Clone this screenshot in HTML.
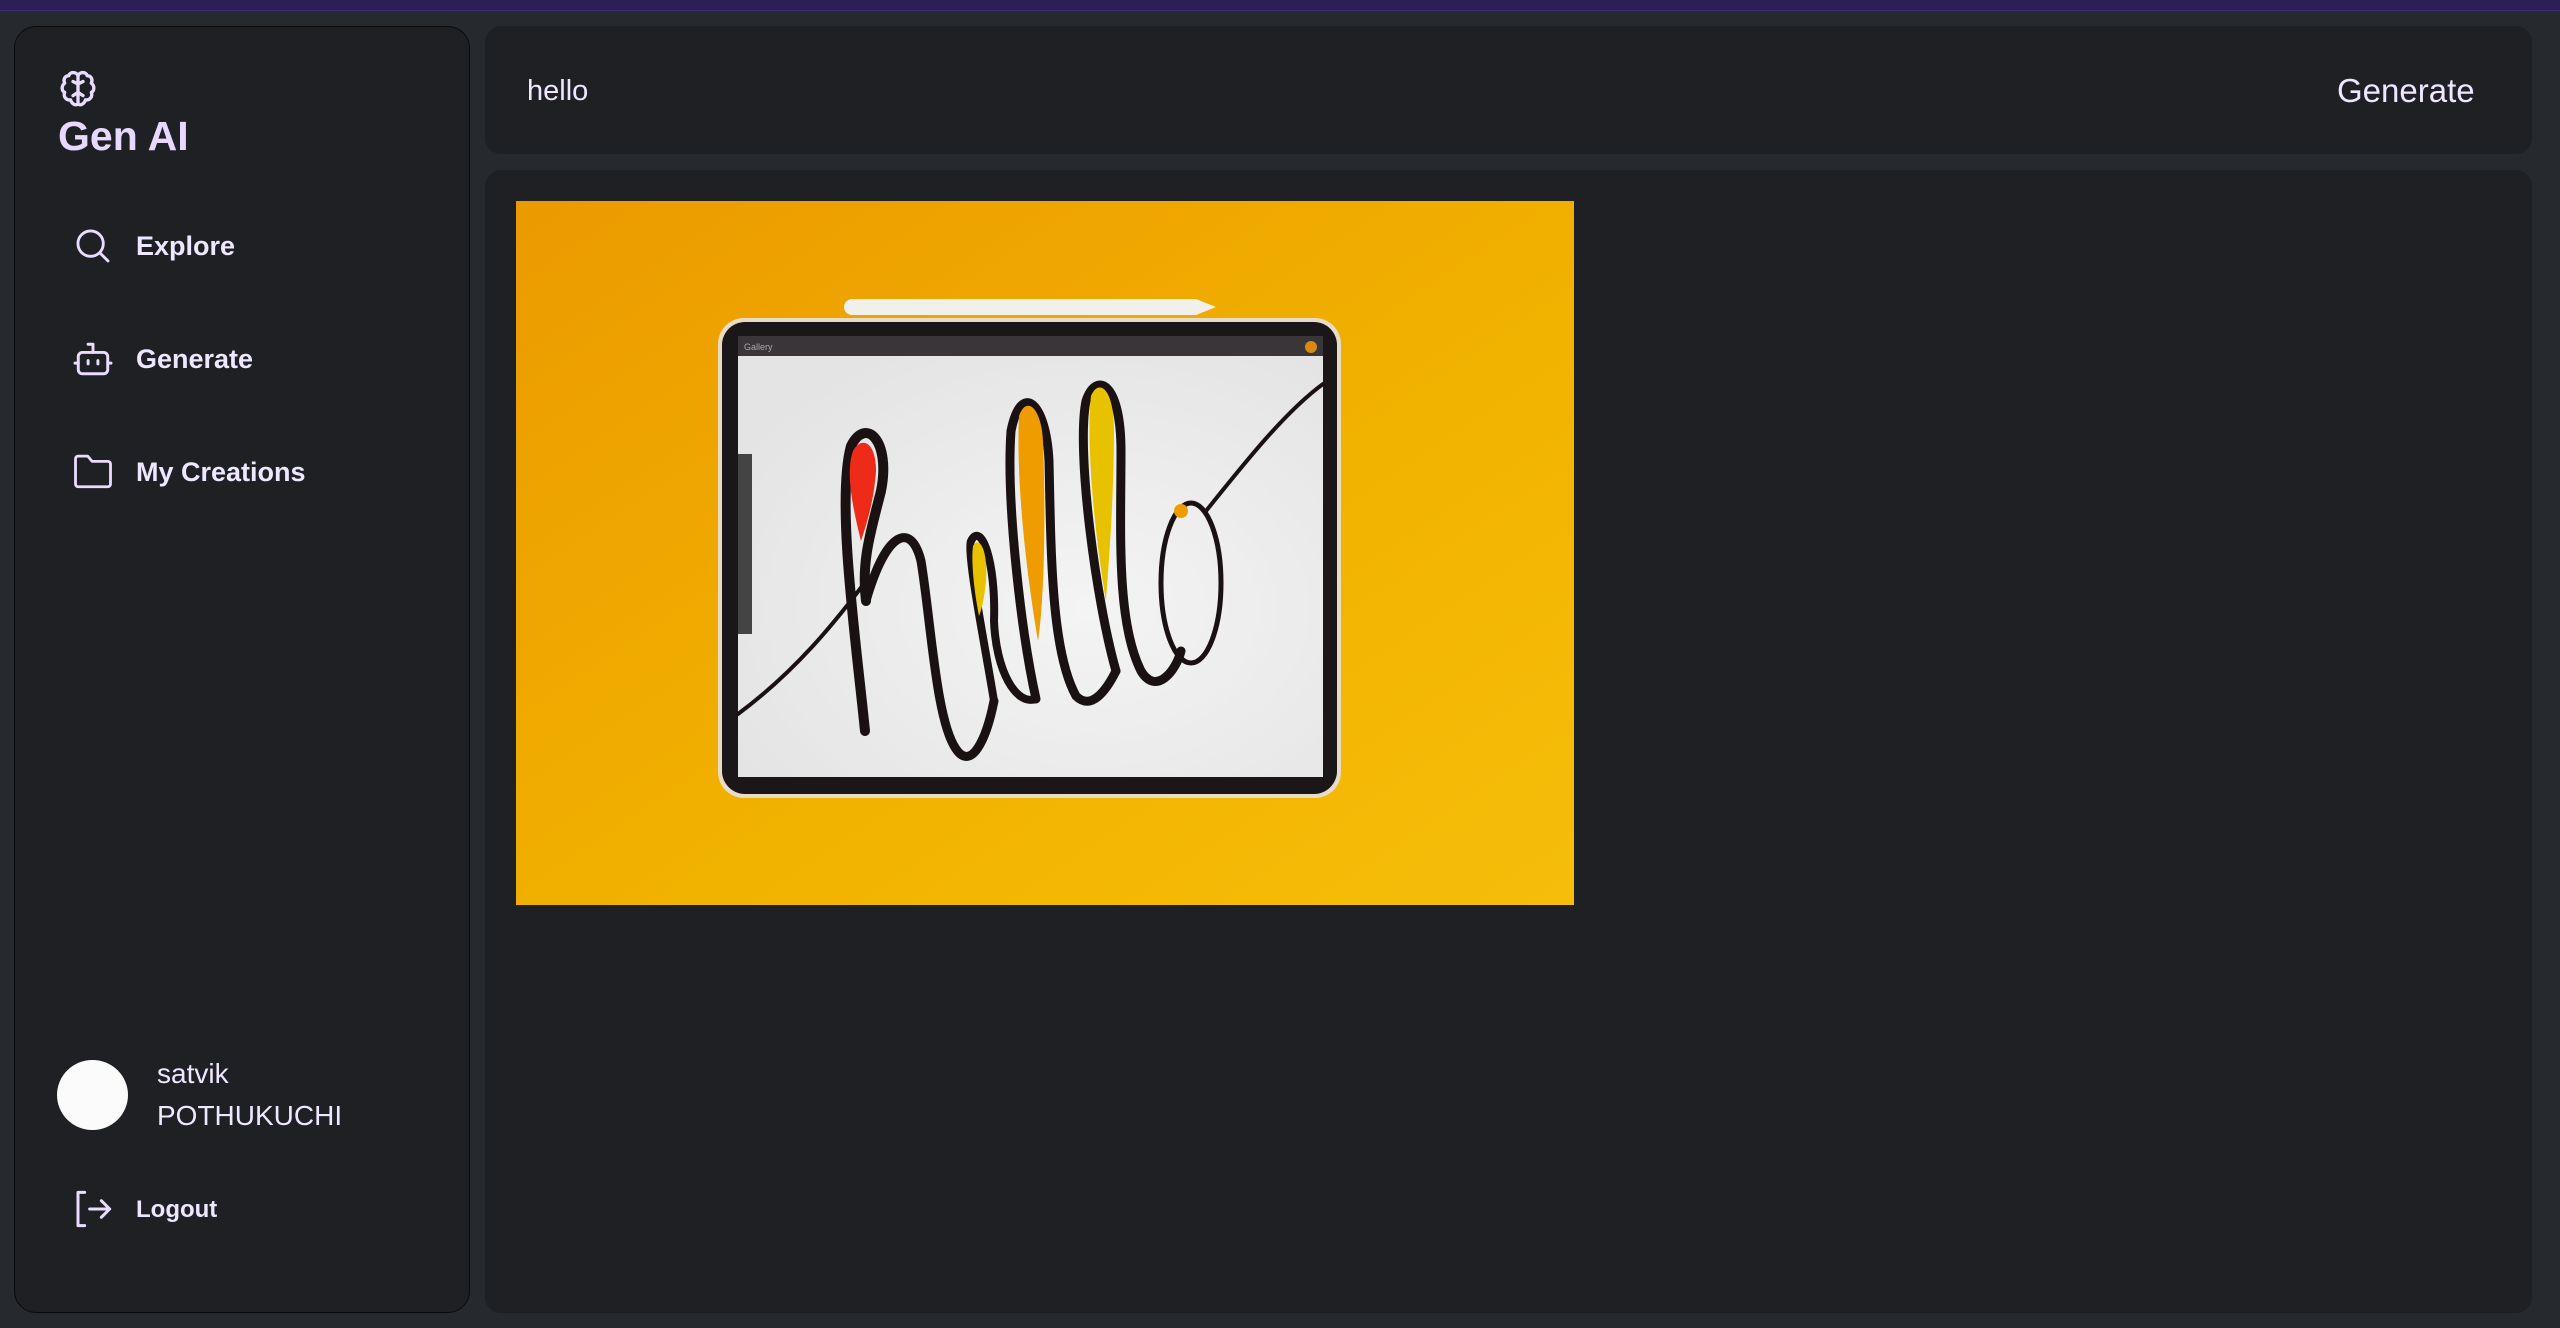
<!DOCTYPE html>
<html><head><meta charset="utf-8"><style>
*{margin:0;padding:0;box-sizing:border-box}
body{width:2560px;height:1328px;background:#26292d;position:relative;overflow:hidden;font-family:"Liberation Sans",sans-serif;color:#efe6ff}
.top{position:absolute;left:0;top:0;width:2560px;height:11px;background:#2c1f55;border-bottom:1px solid #3e2e78}
.side{position:absolute;left:14px;top:26px;width:456px;height:1287px;background:#1e2023;border:1.5px solid #0a0a0c;border-radius:22px}
.panel{position:absolute;left:485px;width:2047px;background:#1e2023;border-radius:16px}
.t{position:absolute;white-space:nowrap;line-height:1}
.b{font-weight:bold}
svg.i{position:absolute;fill:none;stroke:#eadcff;stroke-linecap:round;stroke-linejoin:round}
</style></head><body>
<div class="top"></div>
<div class="side"></div>
<div class="panel" style="top:26px;height:128px"></div>
<div class="panel" style="top:170px;height:1143px"></div>

<svg class="i" style="left:58px;top:69px" width="40" height="40" viewBox="0 0 24 24" stroke-width="2"><path d="M12 4v17M12 9l-3-1.5M12 9l3-1.5M12 14l-3 2M12 14l3 2"/><path d="M12 4C11 1.5 7 1.5 6.5 4 4 4 3 6.5 4 8.5 2 10 2 13 4 14 3 16.5 5 19 7.5 18.5 8.5 21.5 11 22 12 21M12 4C13 1.5 17 1.5 17.5 4 20 4 21 6.5 20 8.5 22 10 22 13 20 14 21 16.5 19 19 16.5 18.5 15.5 21.5 13 22 12 21"/></svg>
<div class="t b" style="left:58px;top:116px;font-size:41px;color:#e7d8ff">Gen AI</div>

<svg class="i" style="left:74px;top:227px" width="38" height="38" viewBox="0 0 24 24" stroke-width="1.8"><circle cx="10.5" cy="10.5" r="8"/><path d="M16.5 16.5l5 5"/></svg>
<div class="t b" style="left:136px;top:233px;font-size:27px">Explore</div>

<svg class="i" style="left:73px;top:341px" width="40" height="36" viewBox="0 0 24 22" stroke-width="1.8"><rect x="3" y="7" width="18" height="13" rx="2.5"/><path d="M12 7V2H9M1 13.5h2M21 13.5h2M9 12v2M15 12v2"/></svg>
<div class="t b" style="left:136px;top:346px;font-size:27px">Generate</div>

<svg class="i" style="left:72px;top:453px" width="42" height="36" viewBox="0 0 24 20" stroke-width="1.6"><path d="M2 3a1.5 1.5 0 0 1 1.5-1.5H9l2.5 3h9A1.5 1.5 0 0 1 22 6v11.5a1.5 1.5 0 0 1-1.5 1.5h-17A1.5 1.5 0 0 1 2 17.5z"/></svg>
<div class="t b" style="left:136px;top:459px;font-size:27px">My Creations</div>

<div style="position:absolute;left:57px;top:1060px;width:71px;height:70px;border-radius:50%;background:#fbfbfb"></div>
<div class="t" style="left:157px;top:1060px;font-size:28px">satvik</div>
<div class="t" style="left:157px;top:1102px;font-size:28px">POTHUKUCHI</div>

<svg class="i" style="left:73px;top:1189px" width="40" height="40" viewBox="0 0 24 24" stroke-width="1.8"><path d="M7 2H3v20h4M10 12h12M17 7l5 5-5 5"/></svg>
<div class="t b" style="left:136px;top:1198px;font-size:24px">Logout</div>

<div class="t" style="left:527px;top:77px;font-size:29px">hello</div>
<div class="t" style="left:2337px;top:74px;font-size:33px">Generate</div>

<svg style="position:absolute;left:516px;top:201px" width="1058" height="704" viewBox="0 0 1058 704">
<defs><linearGradient id="g" x1="0" y1="0" x2="1" y2="1"><stop offset="0" stop-color="#eb9a00"/><stop offset="0.6" stop-color="#f2b300"/><stop offset="1" stop-color="#f5be0a"/></linearGradient>
<radialGradient id="s" cx="0.6" cy="0.6" r="0.7"><stop offset="0" stop-color="#f4f4f4"/><stop offset="1" stop-color="#e4e4e4"/></radialGradient></defs>
<rect width="1058" height="704" fill="url(#g)"/>
<path d="M336 98 H680 L700 106 L680 114 H336 A8 8 0 0 1 336 98Z" fill="#f2f0ea"/>
<rect x="202" y="117" width="623" height="480" rx="26" fill="#e8dcc8"/>
<rect x="206" y="121" width="615" height="472" rx="23" fill="#1b1617"/>
<rect x="222" y="135" width="585" height="20" fill="#3a3538"/>
<text x="228" y="149" font-size="9" fill="#aaa" font-family="Liberation Sans">Gallery</text>
<circle cx="795" cy="146" r="6" fill="#d88a10"/>
<rect x="222" y="155" width="585" height="421" fill="url(#s)"/>
<rect x="222" y="253" width="14" height="180" fill="#444"/>
<g fill="none" stroke="#1a1212" stroke-linecap="round">
<path d="M222 513 C 280 470, 320 420, 350 380" stroke-width="4"/>
<path d="M349 530 C 340 440, 320 300, 335 245 C 350 215, 375 240, 365 290 C 355 330, 345 360, 350 400" stroke-width="10"/>
<path d="M350 400 C 370 330, 395 320, 405 360 C 415 420, 420 520, 440 548 C 455 570, 470 540, 478 500" stroke-width="9"/>
<path d="M478 500 C 470 450, 450 350, 455 340 C 465 320, 480 360, 478 420 C 480 470, 500 505, 520 498" stroke-width="8"/>
<path d="M520 498 C 505 430, 490 300, 495 230 C 505 180, 530 200, 533 260 C 535 350, 535 450, 560 495 C 575 510, 590 490, 600 470" stroke-width="9"/>
<path d="M600 470 C 580 400, 560 250, 570 200 C 580 170, 605 180, 605 250 C 605 330, 600 420, 625 470 C 640 495, 660 470, 665 450" stroke-width="9"/>
<ellipse cx="675" cy="382" rx="30" ry="80" stroke-width="5"/>
<path d="M690 310 C 730 260, 770 210, 807 183" stroke-width="4"/>
</g>
<path d="M337 250 C 345 235, 360 240, 360 270 C 358 300, 350 325, 345 340 C 335 300, 330 270, 337 250Z" fill="#ee2a18"/>
<path d="M503 215 C 510 195, 525 205, 527 240 C 530 320, 528 400, 522 440 C 510 370, 500 280, 503 215Z" fill="#ee9c00"/>
<path d="M575 195 C 582 178, 598 185, 598 230 C 598 300, 592 370, 590 400 C 578 330, 570 240, 575 195Z" fill="#e8c200"/>
<path d="M457 345 C 462 335, 472 345, 470 380 C 468 400, 465 410, 463 415 C 458 390, 455 360, 457 345Z" fill="#e8c200"/>
<circle cx="665" cy="310" r="7" fill="#ee9c00"/>
</svg>
</body></html>
